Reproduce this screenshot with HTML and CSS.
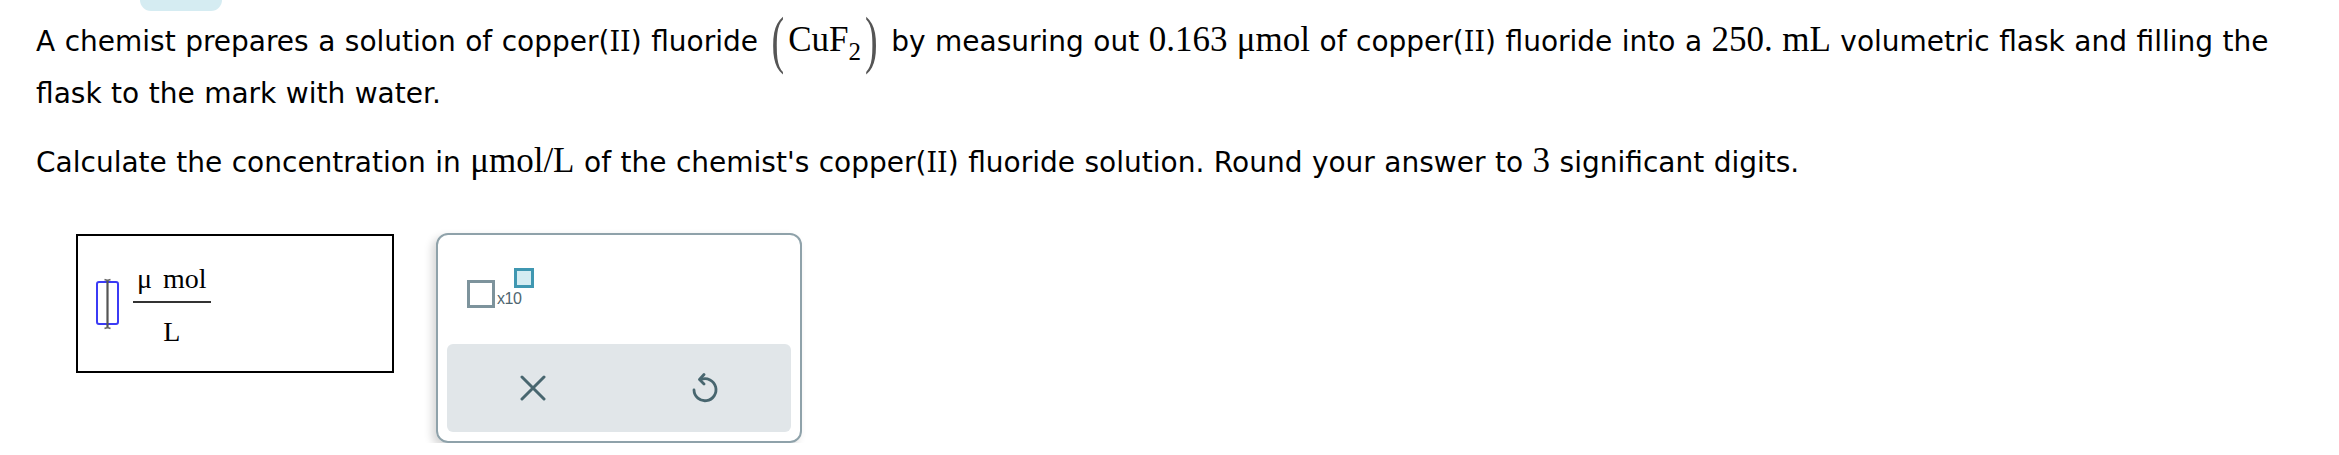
FILE: index.html
```html
<!DOCTYPE html>
<html lang="en">
<head>
<meta charset="utf-8">
<title>Concentration question</title>
<link rel="stylesheet" href="styles.css">
</head>
<body>
<div class="tab"></div>
<div class="question">
  <p class="p1">A chemist prepares a solution of copper(<span class="rn">II</span>) fluoride <span class="paren">(</span><span class="m">CuF<sub>2</sub></span><span class="paren">)</span> by measuring out <span class="m">0.163 μmol</span> of copper(<span class="rn">II</span>) fluoride into a <span class="m">250. mL</span> volumetric flask and filling the flask to the mark with water.</p>
  <p class="p2">Calculate the concentration in <span class="m">μmol/L</span> of the chemist's copper(<span class="rn">II</span>) fluoride solution. Round your answer to <span class="m">3</span> significant digits.</p>
</div>
<div class="answer-row">
  <div class="answer-box">
    <svg class="cursor" width="25" height="52" viewBox="0 0 25 52">
      <rect x="2" y="4" width="21" height="42" rx="2" fill="none" stroke="#3b3bf5" stroke-width="2"/>
      <line x1="12.5" y1="2" x2="12.5" y2="50" stroke="#555" stroke-width="2.2"/>
      <path d="M9.5 1.5 Q12.5 3 15.5 1.5 M9.5 50.5 Q12.5 49 15.5 50.5" fill="none" stroke="#666" stroke-width="1.4"/>
    </svg>
    <div class="frac">
      <span class="num">μ mol</span>
      <span class="den">L</span>
    </div>
  </div>
  <div class="panel">
    <div class="tools">
      <div class="x10">
        <span class="base"></span>
        <span class="times">x10</span>
        <span class="exp"></span>
      </div>
    </div>
    <div class="actions">
      <button class="act" type="button" aria-label="Clear">
        <svg width="26" height="26" viewBox="0 0 26 26"><path d="M2 2 L24 24 M24 2 L2 24" stroke="#48666f" stroke-width="3" stroke-linecap="round" fill="none"/></svg>
      </button>
      <button class="act" type="button" aria-label="Undo">
        <svg width="28" height="30" viewBox="0 0 28 30"><path d="M10 6.5 A11 11 0 1 1 3 17" stroke="#48666f" stroke-width="2.8" stroke-linecap="round" fill="none"/><path d="M13 1.5 L8.5 6.5 L13 11" stroke="#48666f" stroke-width="2.8" stroke-linecap="round" stroke-linejoin="round" fill="none"/></svg>
      </button>
    </div>
  </div>
</div>
</body>
</html>
```

FILE: styles.css
```css
html, body {
  margin: 0;
  padding: 0;
  background: #ffffff;
}

body {
  font-family: "DejaVu Sans", Verdana, sans-serif;
  color: #000;
}

.tab {
  margin-left: 140px;
  width: 82px;
  height: 11px;
  background: #d5ecf2;
  border-radius: 0 0 14px 14px;
}

.question {
  padding: 0 40px 0 36px;
}

.question p {
  margin: 0;
  font-size: 28px;
  line-height: 52px;
  word-spacing: 0.6px;
}

.p1 {
  margin-top: 5px !important;
}

.p2 {
  margin-top: 17px !important;
}

.rn {
  font-family: "DejaVu Serif", serif;
  font-size: 27px;
}

.m {
  font-family: "Liberation Serif", "Times New Roman", serif;
  font-size: 35px;
  line-height: 1;
}

.m sub {
  font-size: 25px;
  line-height: 0;
  vertical-align: -9px;
}

.paren {
  display: inline-block;
  font-family: "Liberation Serif", serif;
  font-size: 38px;
  line-height: 34px;
  color: #555;
  transform: translateY(2px) scaleY(1.65);
  margin: 0 4px;
}

.answer-row {
  display: flex;
  align-items: flex-start;
  gap: 42px;
  margin-top: 45px;
  padding-left: 76px;
}

.answer-box {
  box-sizing: border-box;
  width: 318px;
  height: 139px;
  border: 2px solid #000;
  display: flex;
  align-items: center;
  padding-left: 17px;
  gap: 13px;
}

.cursor {
  display: block;
}

.frac {
  align-self: flex-start;
  display: flex;
  flex-direction: column;
  align-items: center;
  font-family: "Liberation Serif", "Times New Roman", serif;
  font-size: 28px;
  line-height: 28px;
  margin-top: 29px;
}

.num {
  padding: 0 4px 8px;
  border-bottom: 2px solid #333;
  word-spacing: 4px;
}

.den {
  padding-top: 15px;
}

.panel {
  box-sizing: border-box;
  width: 366px;
  height: 210px;
  border: 2px solid #8fa2aa;
  border-radius: 12px;
  padding: 9px;
  display: flex;
  flex-direction: column;
  justify-content: space-between;
  box-shadow: -4px 4px 9px rgba(0, 0, 0, 0.16);
  margin-top: -1px;
}

.tools {
  padding: 24px 0 0 20px;
}

.x10 {
  display: flex;
  align-items: flex-start;
}

.base {
  box-sizing: border-box;
  width: 28px;
  height: 28px;
  border: 3px solid #7d939c;
  margin-top: 12px;
}

.times {
  font-family: "Liberation Sans", Arial, sans-serif;
  font-size: 16px;
  line-height: 16px;
  color: #4f6670;
  margin: 23px 0 0 2px;
  letter-spacing: -0.5px;
}

.exp {
  box-sizing: border-box;
  width: 20px;
  height: 20px;
  border: 3px solid #3f97b1;
  background: #d4ecf2;
  margin-left: -7px;
}

.actions {
  display: flex;
  height: 88px;
  background: #e1e6e9;
  border-radius: 6px;
}

.act {
  flex: 1;
  border: 0;
  background: transparent;
  padding: 0;
  display: flex;
  align-items: center;
  justify-content: center;
}

.act svg {
  display: block;
}
```
